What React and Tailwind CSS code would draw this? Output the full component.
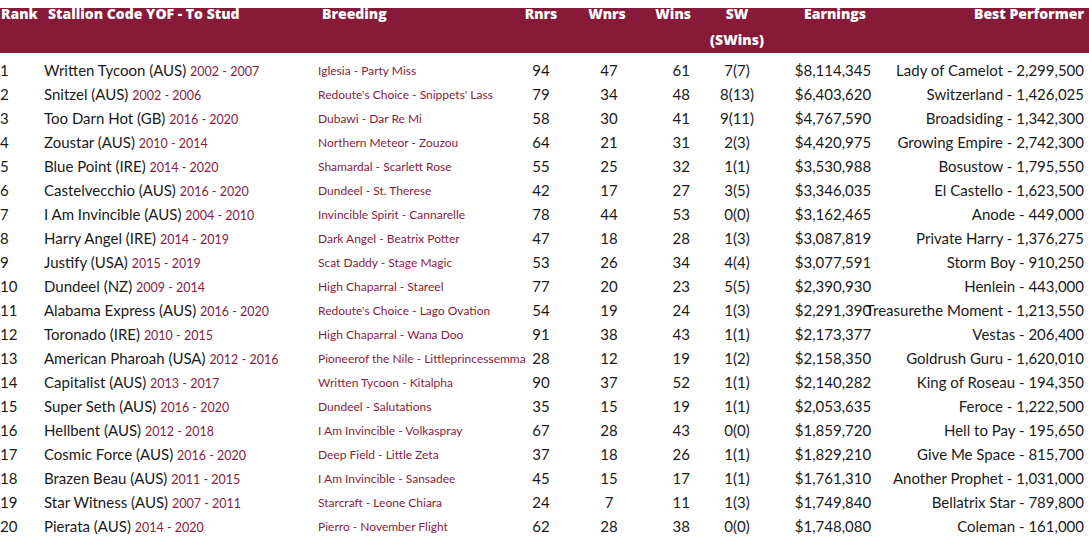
const rows = [
  ["1", "Written Tycoon (AUS)", "2002 - 2007", "Iglesia - Party Miss", "94", "47", "61", "7(7)", "$8,114,345", "Lady of Camelot - 2,299,500"],
  ["2", "Snitzel (AUS)", "2002 - 2006", "Redoute's Choice - Snippets' Lass", "79", "34", "48", "8(13)", "$6,403,620", "Switzerland - 1,426,025"],
  ["3", "Too Darn Hot (GB)", "2016 - 2020", "Dubawi - Dar Re Mi", "58", "30", "41", "9(11)", "$4,767,590", "Broadsiding - 1,342,300"],
  ["4", "Zoustar (AUS)", "2010 - 2014", "Northern Meteor - Zouzou", "64", "21", "31", "2(3)", "$4,420,975", "Growing Empire - 2,742,300"],
  ["5", "Blue Point (IRE)", "2014 - 2020", "Shamardal - Scarlett Rose", "55", "25", "32", "1(1)", "$3,530,988", "Bosustow - 1,795,550"],
  ["6", "Castelvecchio (AUS)", "2016 - 2020", "Dundeel - St. Therese", "42", "17", "27", "3(5)", "$3,346,035", "El Castello - 1,623,500"],
  ["7", "I Am Invincible (AUS)", "2004 - 2010", "Invincible Spirit - Cannarelle", "78", "44", "53", "0(0)", "$3,162,465", "Anode - 449,000"],
  ["8", "Harry Angel (IRE)", "2014 - 2019", "Dark Angel - Beatrix Potter", "47", "18", "28", "1(3)", "$3,087,819", "Private Harry - 1,376,275"],
  ["9", "Justify (USA)", "2015 - 2019", "Scat Daddy - Stage Magic", "53", "26", "34", "4(4)", "$3,077,591", "Storm Boy - 910,250"],
  ["10", "Dundeel (NZ)", "2009 - 2014", "High Chaparral - Stareel", "77", "20", "23", "5(5)", "$2,390,930", "Henlein - 443,000"],
  ["11", "Alabama Express (AUS)", "2016 - 2020", "Redoute's Choice - Lago Ovation", "54", "19", "24", "1(3)", "$2,291,390", "Treasurethe Moment - 1,213,550"],
  ["12", "Toronado (IRE)", "2010 - 2015", "High Chaparral - Wana Doo", "91", "38", "43", "1(1)", "$2,173,377", "Vestas - 206,400"],
  ["13", "American Pharoah (USA)", "2012 - 2016", "Pioneerof the Nile - Littleprincessemma", "28", "12", "19", "1(2)", "$2,158,350", "Goldrush Guru - 1,620,010"],
  ["14", "Capitalist (AUS)", "2013 - 2017", "Written Tycoon - Kitalpha", "90", "37", "52", "1(1)", "$2,140,282", "King of Roseau - 194,350"],
  ["15", "Super Seth (AUS)", "2016 - 2020", "Dundeel - Salutations", "35", "15", "19", "1(1)", "$2,053,635", "Feroce - 1,222,500"],
  ["16", "Hellbent (AUS)", "2012 - 2018", "I Am Invincible - Volkaspray", "67", "28", "43", "0(0)", "$1,859,720", "Hell to Pay - 195,650"],
  ["17", "Cosmic Force (AUS)", "2016 - 2020", "Deep Field - Little Zeta", "37", "18", "26", "1(1)", "$1,829,210", "Give Me Space - 815,700"],
  ["18", "Brazen Beau (AUS)", "2011 - 2015", "I Am Invincible - Sansadee", "45", "15", "17", "1(1)", "$1,761,310", "Another Prophet - 1,031,000"],
  ["19", "Star Witness (AUS)", "2007 - 2011", "Starcraft - Leone Chiara", "24", "7", "11", "1(3)", "$1,749,840", "Bellatrix Star - 789,800"],
  ["20", "Pierata (AUS)", "2014 - 2020", "Pierro - November Flight", "62", "28", "38", "0(0)", "$1,748,080", "Coleman - 161,000"],
];

const cols = "grid grid-cols-[44px_274px_202px_42px_94px_34px_94px_98px_202px]";

export default function App() {
  return (
    <div className="h-[555px] w-[1089px] overflow-hidden bg-white pt-2 font-['Lato','Liberation_Sans',sans-serif] text-[#1a1a1a]">
      {/* header band */}
      <div className="flow-root h-[45px] bg-[#861a38] font-['Open_Sans','Liberation_Sans',sans-serif] text-[14px] font-extrabold text-white">
        <div className={`${cols} -mt-[7px] leading-[26px] whitespace-nowrap`}>
          <div className="pl-px">Rank</div>
          <div className="pl-1">Stallion Code YOF - To Stud</div>
          <div className="pl-1">Breeding</div>
          <div className="flex justify-center">Rnrs</div>
          <div className="flex justify-center pr-1">Wnrs</div>
          <div className="flex justify-end -mr-px">Wins</div>
          <div className="flex flex-col items-center">
            <span>SW</span>
            <span>(SWins)</span>
          </div>
          <div className="flex justify-center pl-1">Earnings</div>
          <div className="flex justify-end">Best Performer</div>
        </div>
      </div>

      {/* body rows */}
      <div className="mt-[5px]">
        {rows.map((r) => (
          <div key={r[0]} className={`${cols} h-6 items-center whitespace-nowrap text-[15px]`}>
            <div>{r[0]}</div>
            <div>
              {r[1]} <span className="text-[12.5px] text-[#8a1c3e]">{r[2]}</span>
            </div>
            <div className="pt-0.5 text-[12px] text-[#8a1c3e]">{r[3]}</div>
            <div className="flex justify-center">{r[4]}</div>
            <div className="flex justify-center">{r[5]}</div>
            <div className="flex justify-end">{r[6]}</div>
            <div className="flex justify-center">{r[7]}</div>
            <div className="flex justify-center">{r[8]}</div>
            <div className="flex justify-end">{r[9]}</div>
          </div>
        ))}
      </div>
    </div>
  );
}
